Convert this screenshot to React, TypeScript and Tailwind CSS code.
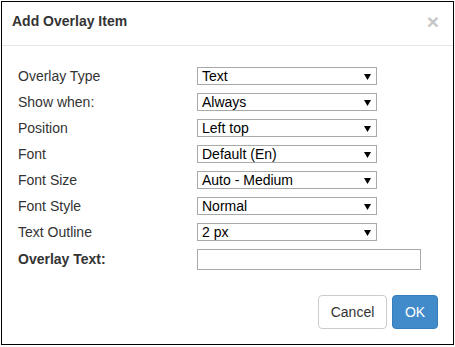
import React from "react";

const rows: { label: string; value: string }[] = [
  { label: "Overlay Type", value: "Text" },
  { label: "Show when:", value: "Always" },
  { label: "Position", value: "Left top" },
  { label: "Font", value: "Default (En)" },
  { label: "Font Size", value: "Auto - Medium" },
  { label: "Font Style", value: "Normal" },
  { label: "Text Outline", value: "2 px" },
];

function FakeSelect({ value }: { value: string }) {
  return (
    <div className="w-[180px] h-[18px] border border-[#a9a9a9] flex items-center justify-between pl-[4px] pr-[5px] text-[14px] text-black leading-none">
      <span>{value}</span>
      <svg width="7" height="7" viewBox="0 0 7 7">
        <polygon points="0,1 7,1 3.5,7" fill="#000" />
      </svg>
    </div>
  );
}

export default function App() {
  return (
    <div className="bg-white p-[1px] w-[455px] h-[347px] font-['Liberation_Sans',Arial,sans-serif]">
      <div className="w-[453px] h-[344px] border border-black flex flex-col">
        {/* header */}
        <div className="h-[44px] border-b border-[#e5e5e5] flex items-center justify-between pl-[10px] pr-[14px] pb-[4px]">
          <h4 className="text-[14px] font-bold text-[#333]">Add Overlay Item</h4>
          <span className="text-[21px] font-bold leading-none text-[#c6c6c6]">×</span>
        </div>

        {/* body */}
        <div className="flex flex-col gap-2 pt-[21px] pl-4">
          {rows.map((r) => (
            <div key={r.label} className="flex items-center h-[18px]">
              <label className="w-[179px] text-[14px] text-[#333] pt-[1px]">{r.label}</label>
              <FakeSelect value={r.value} />
            </div>
          ))}
          <div className="flex items-center h-[21px]">
            <label className="w-[179px] text-[14px] font-bold text-[#333]">Overlay Text:</label>
            <div className="w-[224px] h-[21px] border border-[#a9a9a9]" />
          </div>
        </div>

        {/* footer */}
        <div className="flex justify-end gap-[5px] mt-[25px] pr-[15px]">
          <button className="w-[69px] h-[34px] border border-[#ccc] rounded-[4px] bg-white text-[14px] text-[#333]">
            Cancel
          </button>
          <button className="w-[46px] h-[34px] border border-[#357ebd] rounded-[4px] bg-[#428bca] text-[14px] text-white">
            OK
          </button>
        </div>
      </div>
    </div>
  );
}
